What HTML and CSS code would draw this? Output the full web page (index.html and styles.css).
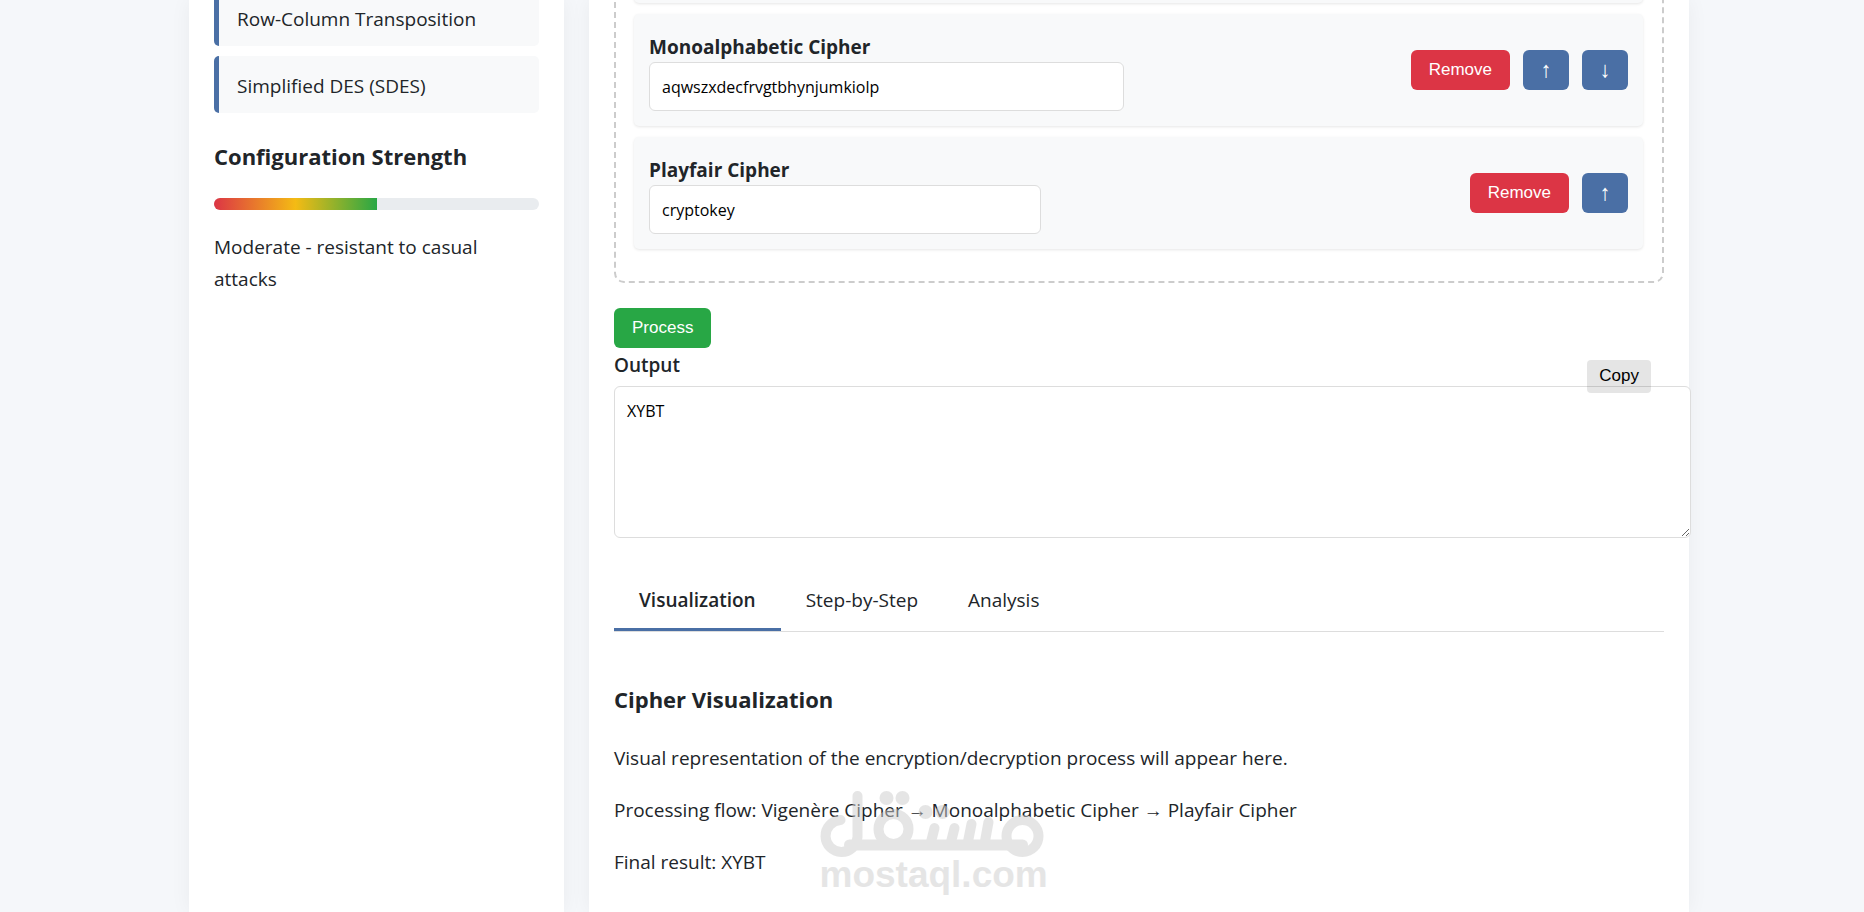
FILE: index.html
```html
<!DOCTYPE html>
<html lang="en">
<head>
<meta charset="utf-8">
<title>Cipher Workbench</title>
<link rel="stylesheet" href="styles.css">
</head>
<body>
<div class="layout">
  <aside class="panel sidebar">
    <ul class="cipher-list">
      <li class="cipher-option">Row-Column Transposition</li>
      <li class="cipher-option">Simplified DES (SDES)</li>
    </ul>
    <h3 class="heading">Configuration Strength</h3>
    <div class="meter"><div class="meter-fill" style="width: 50%"></div></div>
    <p class="text">Moderate - resistant to casual attacks</p>
  </aside>
  <main class="panel main">
    <section class="drop-zone">
      <div class="card"></div>
      <div class="card">
        <div class="card-body card-body-wide">
          <label class="card-title" for="mono">Monoalphabetic Cipher</label>
          <input class="field" id="mono" type="text" value="aqwszxdecfrvgtbhynjumkiolp">
        </div>
        <div class="card-actions">
          <button class="btn btn-danger" type="button">Remove</button>
          <button class="btn btn-move" type="button" aria-label="Move up">↑</button>
          <button class="btn btn-move" type="button" aria-label="Move down">↓</button>
        </div>
      </div>
      <div class="card">
        <div class="card-body">
          <label class="card-title" for="playfair">Playfair Cipher</label>
          <input class="field" id="playfair" type="text" value="cryptokey">
        </div>
        <div class="card-actions">
          <button class="btn btn-danger" type="button">Remove</button>
          <button class="btn btn-move" type="button" aria-label="Move up">↑</button>
        </div>
      </div>
    </section>
    <button class="btn btn-success" type="button">Process</button>
    <div class="output">
      <label class="output-label" for="output">Output</label>
      <textarea class="field output-field" id="output">XYBT</textarea>
      <button class="copy" type="button">Copy</button>
    </div>
    <nav class="tabs">
      <button class="tab tab-active" type="button">Visualization</button>
      <button class="tab" type="button">Step-by-Step</button>
      <button class="tab" type="button">Analysis</button>
    </nav>
    <section class="result">
      <h3 class="heading">Cipher Visualization</h3>
      <p class="text">Visual representation of the encryption/decryption process will appear here.</p>
      <p class="text">Processing flow: Vigenère Cipher → Monoalphabetic Cipher → Playfair Cipher</p>
      <p class="text">Final result: XYBT</p>
    </section>
  </main>
</div>
<div class="watermark">
  <svg class="watermark-logo" viewBox="0 0 225 67" width="225" height="67" fill="none" stroke="currentColor" stroke-width="10" stroke-linecap="round" aria-hidden="true">
    <path d="M21 29A16 16 0 1 0 38 46V5"/>
    <path d="M30 54H203" stroke-width="11"/>
    <circle cx="74" cy="38" r="15"/>
    <path d="M111 53 115 37M131 53 135 37M148 53 152 33M165 53 169 31"/>
    <circle cx="203" cy="45" r="16"/>
    <g fill="currentColor" stroke="none"><circle cx="67" cy="7" r="7"/><circle cx="83" cy="7" r="7"/><circle cx="106" cy="21" r="7"/><circle cx="123" cy="21" r="7"/></g>
  </svg>
  <span class="watermark-name">mostaql.com</span>
</div>
</body>
</html>
```
FILE: styles.css
```css
* { box-sizing: border-box; }
body {
  margin: 0;
  padding-left: 14px;
  min-height: 100vh;
  overflow: hidden;
  background: #f5f7fa;
  color: #212529;
  font: 19px/32px "Segoe UI", "Open Sans", sans-serif;
}
.layout {
  display: flex;
  gap: 25px;
  max-width: 1500px;
  height: 100vh;
  margin: 0 auto;
}
.panel {
  background: #fff;
  box-shadow: 0 0 20px rgba(0, 0, 0, 0.05);
}
.sidebar { flex: 0 0 25%; padding: 0 25px; }
.main { flex: 1; min-width: 0; padding: 0 25px; }
.cipher-list {
  display: grid;
  gap: 10px;
  margin: -11px 0 0;
  padding: 0;
  list-style: none;
}
.cipher-option {
  padding: 14px 18px 11px;
  border-left: 5px solid #4a6fa5;
  border-radius: 5px;
  background: #f8f9fa;
}
.heading {
  margin: 0;
  font-size: 22px;
  line-height: 38px;
  font-weight: 700;
}
.sidebar .heading { margin: 24px 0 23px; }
.text { margin: 0; }
.meter {
  height: 12px;
  margin-bottom: 21px;
  overflow: hidden;
  border-radius: 6px;
  background: #e9ecef;
}
.meter-fill {
  height: 100%;
  background: linear-gradient(90deg, #dc3545, #f4bb14 50%, #28a745);
}
.drop-zone {
  display: grid;
  gap: 11px;
  margin: -128px 0 25px;
  padding: 17px 19px 32px 18px;
  border: 2px dashed #ccc;
  border-radius: 10px;
}
.card {
  display: flex;
  align-items: center;
  justify-content: space-between;
  min-height: 112px;
  padding: 15px;
  border-radius: 5px;
  background: #f8f9fa;
  box-shadow: 0 1px 3px rgba(0, 0, 0, 0.1);
}
.card-body { width: 40%; }
.card-body-wide { width: 475px; max-width: 100%; }
.card-title { display: block; padding-top: 3px; line-height: 29px; font-weight: 700; }
.field {
  display: block;
  width: 100%;
  padding: 13px 12px 11px;
  border: 1px solid #ddd;
  border-radius: 6px;
  background: #fff;
  color: #000;
  font: 16px/23px "Segoe UI", "Open Sans", sans-serif;
}
.card-actions { display: flex; gap: 13px; }
.btn {
  height: 40px;
  padding: 0 18px 1px;
  border: 0;
  border-radius: 6px;
  color: #fff;
  font: 17px/20px "Liberation Sans", sans-serif;
}
.btn-danger { background: #dc3545; }
.btn-move { min-width: 46px; padding: 0; background: #4a6fa5; font-size: 22px; }
.btn-success { display: block; background: #28a745; }
.output { position: relative; }
.output-label { display: block; padding: 2px 0 6px; line-height: 30px; font-weight: 600; }
.output-field { width: calc(100% + 27px); height: 152px; resize: vertical; }
.copy {
  position: absolute;
  top: 12px;
  right: 13px;
  height: 33px;
  padding: 0 12px 2px;
  border: 0;
  border-radius: 4px;
  background: rgba(0, 0, 0, 0.1);
  color: #000;
  font: 17px/20px "Liberation Sans", sans-serif;
}
.tabs {
  display: flex;
  margin-top: 34px;
  border-bottom: 1px solid #ddd;
}
.tab {
  padding: 12px 25px;
  border: 0;
  border-bottom: 3px solid transparent;
  background: none;
  color: inherit;
  font: inherit;
}
.tab-active { border-bottom-color: #4a6fa5; font-weight: 600; }
.result { display: grid; gap: 20px; padding-top: 48px; }
.result .heading { padding-bottom: 4px; }
.watermark {
  position: absolute;
  left: 50%;
  top: 791px;
  width: 225px;
  transform: translateX(-50%);
  color: #cdcdcd;
  opacity: 0.5;
  pointer-events: none;
}
.watermark-logo { display: block; }
.watermark-name { display: block; font: 700 37px/34px "Liberation Sans", sans-serif; }
```
